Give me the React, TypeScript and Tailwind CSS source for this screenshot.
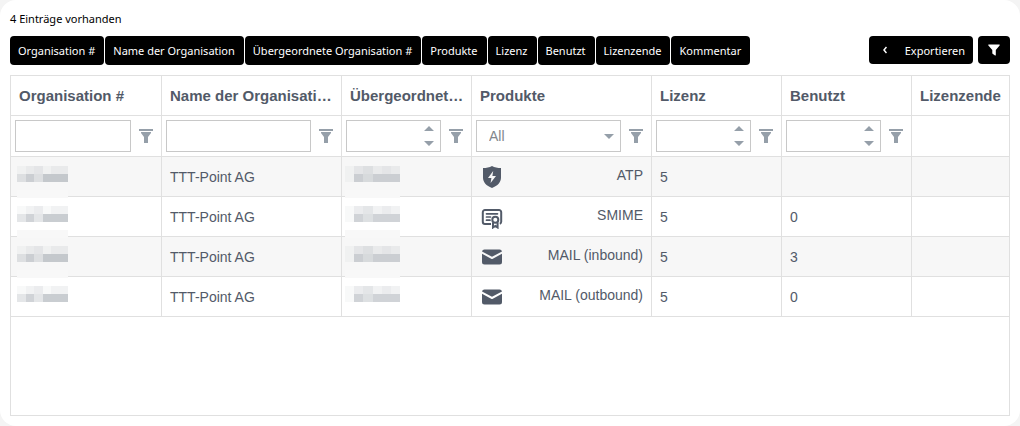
import type { ReactNode } from "react";

const CHIPS = [
  "Organisation #",
  "Name der Organisation",
  "Übergeordnete Organisation #",
  "Produkte",
  "Lizenz",
  "Benutzt",
  "Lizenzende",
  "Kommentar",
];

type FilterKind = "text" | "number" | "select" | "none";

const COLUMNS: { title: string; width: string; filter: FilterKind }[] = [
  { title: "Organisation #", width: "w-[151px]", filter: "text" },
  { title: "Name der Organisati…", width: "w-[180px]", filter: "text" },
  { title: "Übergeordnet…", width: "w-[130px]", filter: "number" },
  { title: "Produkte", width: "w-[180px]", filter: "select" },
  { title: "Lizenz", width: "w-[130px]", filter: "number" },
  { title: "Benutzt", width: "w-[130px]", filter: "number" },
  { title: "Lizenzende", width: "", filter: "none" },
];

const ROWS = [
  { name: "TTT-Point AG", product: "ATP", icon: <ShieldIcon />, license: "5", used: "" },
  { name: "TTT-Point AG", product: "SMIME", icon: <CertificateIcon />, license: "5", used: "0" },
  { name: "TTT-Point AG", product: "MAIL (inbound)", icon: <MailIcon />, license: "5", used: "3" },
  { name: "TTT-Point AG", product: "MAIL (outbound)", icon: <MailIcon />, license: "5", used: "0" },
];

function ShieldIcon() {
  return (
    <svg viewBox="0 0 24 24" className="size-6 shrink-0" fill="currentColor" aria-hidden="true">
      <path
        fillRule="evenodd"
        d="M12 1c2.600 1.400 5.600 2 9 2v9.500c0 4.800-3.200 8.200-9 10.500-5.800-2.300-9-5.700-9-10.500V3c3.400 0 6.400-.6 9-2Zm1.200 5L8 13h3.400l-.8 5L16 11h-3.600L13.200 6Z"
      />
    </svg>
  );
}

function CertificateIcon() {
  return (
    <svg viewBox="0 0 24 24" className="size-6 shrink-0" fill="none" stroke="currentColor" aria-hidden="true">
      <path strokeWidth="2" d="M11 19H5a2.200 2.200 0 0 1-2.200-2.200V7.200A2.200 2.200 0 0 1 5 5h14a2.200 2.200 0 0 1 2.200 2.200v9.600c0 1-.5 1.700-1.400 2" />
      <path strokeWidth="1.700" strokeLinecap="round" d="M6.500 8.800h11M6.500 12h4M6.500 15.200h3.500" />
      <circle cx="15.300" cy="14.800" r="3" strokeWidth="2" />
      <path strokeWidth="2" d="M13 17.500v5l2.300-1.500 2.300 1.500v-5" />
    </svg>
  );
}

function MailIcon() {
  return (
    <svg viewBox="0 0 24 24" className="size-6 shrink-0" fill="currentColor" aria-hidden="true">
      <path d="M22 8.700v8.300a2.500 2.500 0 0 1-2.500 2.500h-15A2.500 2.500 0 0 1 2 17V8.700l9.600 5.300a.8.800 0 0 0 .8 0L22 8.700ZM4.500 4.500h15A2.500 2.500 0 0 1 22 6.500l-10 5.300L2 6.500a2.500 2.500 0 0 1 2.500-2Z" />
    </svg>
  );
}

function FilterButton({ label }: { label: string }) {
  return (
    <button type="button" aria-label={label} className="flex h-8 w-[30px] shrink-0 items-center justify-center text-[#959fa9]">
      <svg viewBox="0 0 14 14" className="h-3.5 w-3.5" fill="currentColor" aria-hidden="true">
        <path d="M0 0h14v2H0zM2 3h10v1L9 8v6H5V8L2 4z" />
      </svg>
    </button>
  );
}

function Filter({ kind, title }: { kind: FilterKind; title: string }) {
  if (kind === "none") return null;

  return (
    <div className="flex h-10 items-center pl-1">
      {kind === "select" ? (
        <div className="relative min-w-0 flex-1">
          <select
            aria-label={title}
            className="block h-8 w-full appearance-none border border-[#c8c8c8] bg-white pl-3 text-sm text-[#82868c] outline-none"
          >
            <option>All</option>
          </select>
          <svg viewBox="0 0 10 5" className="pointer-events-none absolute top-3.5 right-[7px] h-[5px] w-2.5" aria-hidden="true">
            <path d="M0 0h10L5 5z" fill="#959fa9" />
          </svg>
        </div>
      ) : (
        <div className="relative min-w-0 flex-1">
          <input
            type="text"
            inputMode={kind === "number" ? "numeric" : "text"}
            aria-label={title}
            className="block h-8 w-full border border-[#c8c8c8] bg-white px-2 text-sm outline-none"
          />
          {kind === "number" && (
            <svg viewBox="0 0 10 20" className="pointer-events-none absolute top-1.5 right-[7px] h-5 w-2.5" aria-hidden="true">
              <path d="M5 0l5 5H0zM0 15h10l-5 5z" fill="#959fa9" />
            </svg>
          )}
        </div>
      )}
      <FilterButton label={`${title} filtern`} />
    </div>
  );
}

const ORG_TILES = [
  "bg-[#78828c]/5", "bg-[#78828c]/10", "bg-[#78828c]/15", "bg-[#78828c]/5", "bg-[#78828c]/10", "bg-[#78828c]/10",
  "bg-[#78828c]/20", "bg-[#78828c]/35", "bg-[#78828c]/20", "bg-[#78828c]/40", "bg-[#78828c]/40", "bg-[#78828c]/40",
];

const PARENT_TILES = [
  "bg-[#78828c]/5", "bg-[#78828c]/15", "bg-[#78828c]/20", "bg-[#78828c]/10", "bg-[#78828c]/15", "bg-[#78828c]/10",
  "bg-[#78828c]/5", "bg-[#78828c]/35", "bg-[#78828c]/25", "bg-[#78828c]/35", "bg-[#78828c]/35", "bg-[#78828c]/35",
];

// Redacted number, the pale strip runs over the row's bottom line
function Redacted({ tiles, className, strip }: { tiles: string[]; className: string; strip: boolean }) {
  return (
    <div className={`absolute top-[9px] z-10 ${className}`}>
      <div className="grid grid-cols-6">
        {tiles.map((tile, i) => (
          <span key={i} className={`h-2 ${tile}`} />
        ))}
      </div>
      {strip && <div className="mt-2 h-2 bg-[#f8f8f8]" />}
    </div>
  );
}

function Cell({ children }: { children?: ReactNode }) {
  return <td className="relative h-10 border-r border-b border-[#e0e0e0] px-2 pt-px last:border-r-0">{children}</td>;
}

export default function App() {
  return (
    <div className="min-h-screen bg-[#f4f4f4] font-['Noto_Sans',sans-serif] text-[11px] text-black">
      <main className="min-h-screen rounded-2xl bg-white p-2.5">
        <p className="leading-[18px]">4 Einträge vorhanden</p>

        <div className="mt-2 flex items-start justify-between">
          <div className="flex gap-px">
            {CHIPS.map((chip) => (
              <button
                key={chip}
                type="button"
                className="h-[29px] rounded bg-black pt-0.5 pr-[9px] pl-2 whitespace-nowrap text-white"
              >
                {chip}
              </button>
            ))}
          </div>
          <div className="flex gap-[5px]">
            <button type="button" className="flex h-7 items-center rounded bg-black pr-2 pl-3.5 text-white">
              <svg viewBox="0 0 4 8" className="mr-[18px] h-2 w-1" fill="none" stroke="currentColor" aria-hidden="true">
                <path d="M3.500 1 1 4l2.500 3" strokeWidth="1.500" />
              </svg>
              <span className="pt-0.5">Exportieren</span>
            </button>
            <button type="button" aria-label="Filter" className="flex h-7 w-8 items-center justify-center rounded bg-black text-white">
              <svg viewBox="0 0 12 12" className="size-3" fill="currentColor" aria-hidden="true">
                <path d="M.8.500h10.400c.5 0 .7.600.4 1L7.800 6v5c0 .5-.5.700-.8.400L4.600 9.800a.8.800 0 0 1-.3-.6V6L.400 1.500C.1 1.100.3.500.8.500Z" />
              </svg>
            </button>
          </div>
        </div>

        <div className="mt-2.5 min-h-[341px] border border-[#e0e0e0] font-['Liberation_Sans',Arial,sans-serif] text-sm text-[#525a68]">
          <table className="w-full table-fixed border-separate border-spacing-0">
            <thead>
              <tr>
                {COLUMNS.map((col) => (
                  <th
                    key={col.title}
                    className={`h-10 border-r border-b border-[#e0e0e0] pt-px pr-1 pl-2 text-left text-[15px] font-bold whitespace-nowrap last:border-r-0 ${col.width}`}
                  >
                    {col.title}
                  </th>
                ))}
              </tr>
              <tr>
                {COLUMNS.map((col) => (
                  <td key={col.title} className="h-[41px] border-r border-b border-[#e0e0e0] p-0 last:border-r-0">
                    <Filter kind={col.filter} title={col.title} />
                  </td>
                ))}
              </tr>
            </thead>
            <tbody>
              {ROWS.map((row, i) => (
                <tr key={row.product} className="odd:bg-[#f7f7f7]">
                  <Cell>
                    <Redacted tiles={ORG_TILES} className="left-1.5 w-[51px]" strip={i < ROWS.length - 1} />
                  </Cell>
                  <Cell>{row.name}</Cell>
                  <Cell>
                    <Redacted tiles={PARENT_TILES} className="left-[3px] w-[55px]" strip={i < ROWS.length - 1} />
                  </Cell>
                  <Cell>
                    <div className="flex items-center justify-between">
                      {row.icon}
                      <span className="pb-1">{row.product}</span>
                    </div>
                  </Cell>
                  <Cell>{row.license}</Cell>
                  <Cell>{row.used}</Cell>
                  <Cell />
                </tr>
              ))}
            </tbody>
          </table>
        </div>
      </main>
    </div>
  );
}
